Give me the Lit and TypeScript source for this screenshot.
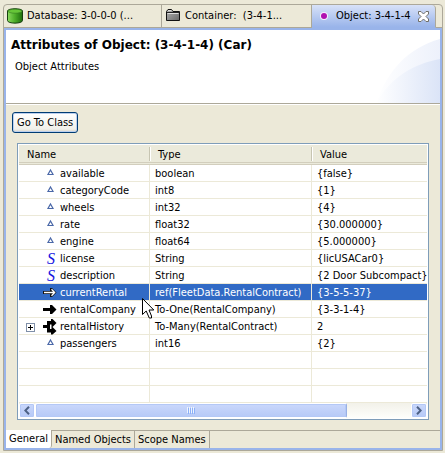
import { LitElement, html, svg, css, nothing } from "lit";
import { customElement } from "lit/decorators.js";
import { classMap } from "lit/directives/class-map.js";

type Kind = "value" | "string" | "ref" | "one" | "many";
interface Attribute {
  name: string;
  kind: Kind;
  type: string;
  value: string;
  selected?: boolean;
}

const ATTRIBUTES: Attribute[] = [
  { name: "available", kind: "value", type: "boolean", value: "{false}" },
  { name: "categoryCode", kind: "value", type: "int8", value: "{1}" },
  { name: "wheels", kind: "value", type: "int32", value: "{4}" },
  { name: "rate", kind: "value", type: "float32", value: "{30.000000}" },
  { name: "engine", kind: "value", type: "float64", value: "{5.000000}" },
  { name: "license", kind: "string", type: "String", value: "{licUSACar0}" },
  { name: "description", kind: "string", type: "String", value: "{2 Door Subcompact}" },
  { name: "currentRental", kind: "ref", type: "ref(FleetData.RentalContract)", value: "{3-5-5-37}", selected: true },
  { name: "rentalCompany", kind: "one", type: "To-One(RentalCompany)", value: "{3-3-1-4}" },
  { name: "rentalHistory", kind: "many", type: "To-Many(RentalContract)", value: "2" },
  { name: "passengers", kind: "value", type: "int16", value: "{2}" },
];
const EMPTY_ROWS = [0, 1, 2];

const KIND_ICONS = {
  value: svg`<path d="M7.5 4 L10 8.5 H5 Z" fill="#fff" stroke="#4a68a8" stroke-width="1.2"/>`,
  ref: svg`<path d="M0 6H7V3H9L13.5 7.5L9 12H7V9H0Z" fill="#111"/><path d="M1 7.5H12M8.5 4.3L11.7 7.5L8.5 10.7" fill="none" stroke="#fff" stroke-width="1.3"/>`,
  one: svg`<path d="M0 6H7V3H9L13.5 7.5L9 12H7V9H0Z" fill="#000"/>`,
  many: svg`<path d="M0 6H4V2H8V0H9.5L13.5 4L9.5 8L13.5 12L9.5 15.5H8V13.5H4V9H0ZM7 5.5V10H8.5V5.5Z" fill="#000" fill-rule="evenodd"/>`,
};

@customElement("app-root")
export class AppRoot extends LitElement {
  static styles = css`
    :host {
      display: flex;
      flex-direction: column;
      box-sizing: border-box;
      min-height: 100vh;
      padding: 4px 2px 2px 3px;
      background: #ece9d8;
      color: #000;
      font: 11px/16px "DejaVu Sans Condensed", "Noto Sans", sans-serif;
      white-space: nowrap;
    }
    button {
      font: inherit;
      color: inherit;
      margin: 0;
      padding: 0;
      border: 0;
      background: none;
      text-align: left;
    }
    svg { display: block; flex: none; }
    .editor {
      flex: 1;
      display: flex;
      flex-direction: column;
      border: 1px solid #aca899;
      border-radius: 4px 4px 0 0;
    }
    .tabs {
      display: grid;
      grid-template-columns: 158fr 150fr 124fr 6fr;
      height: 23px;
    }
    .tab {
      display: flex;
      align-items: center;
      box-sizing: border-box;
      gap: 4px;
      padding: 0 3px;
      border-right: 1px solid #aca899;
      border-bottom: 1px solid #aca899;
      overflow: hidden;
    }
    .object {
      padding: 0 6px 0 4px;
      border-bottom-color: #99b4ea;
      border-radius: 0 4px 0 0;
      background: linear-gradient(#d8e2f8, #99b4ea);
    }
    .rest { border-bottom: 1px solid #aca899; }
    .label { flex: 1; white-space: pre; }
    .content {
      flex: 1;
      display: flex;
      flex-direction: column;
      border: 2px solid #99b4ea;
    }
    .banner {
      display: flex;
      justify-content: space-between;
      height: 73px;
      background: #fff;
      border-bottom: 1px solid #aca899;
    }
    .heading { padding: 6px 5px; }
    h1 {
      margin: 0;
      font: bold 12px/18px "DejaVu Sans", sans-serif;
    }
    p { margin: 5px 4px; }
    .body {
      flex: 1;
      padding: 7px 11px 10px;
      border-top: 1px solid #fff;
    }
    .go {
      display: block;
      height: 21px;
      margin: 0 -5px;
      padding: 0 4px;
      border: 1px solid #003c74;
      border-radius: 3px;
      background: linear-gradient(#fff, #f0f0ea 85%, #d6d0c5);
      box-shadow: inset 0 0 0 1px #bcd0ee;
    }
    .frame {
      margin-top: 10px;
      padding: 1px;
      border: 1px solid #7f9db9;
      background: #fff;
    }
    table {
      width: 100%;
      table-layout: fixed;
      border-collapse: separate;
      border-spacing: 0;
    }
    .name-col { width: 131px; }
    .type-col { width: 162px; }
    th {
      position: relative;
      height: 15px;
      padding: 2px 0 0 8px;
      border-bottom: 3px double #d2cebd;
      background: #ebeadb;
      font-weight: normal;
      line-height: 15px;
      text-align: left;
    }
    th + th::before {
      content: "";
      position: absolute;
      left: -1px;
      top: 2px;
      bottom: 1px;
      border-left: 1px solid #c7c5b2;
      border-right: 1px solid #fff;
    }
    td {
      position: relative;
      height: 14px;
      line-height: 14px;
      padding: 2px 0 0 5px;
      border-right: 1px solid #ece9d8;
      border-bottom: 1px solid #ece9d8;
    }
    td:last-child { border-right: 0; }
    .selected td {
      background: #316ac5;
      color: #fff;
    }
    .name {
      display: grid;
      grid-template: 14px / 18px 16px 1fr;
      align-items: center;
      column-gap: 1px;
    }
    .expand {
      width: 9px;
      height: 9px;
      margin-left: 2px;
    }
    .script {
      color: #1414e0;
      font: italic 16px/14px "Liberation Serif", serif;
      text-align: center;
    }
    .cursor {
      position: absolute;
      z-index: 1;
      left: -8px;
      top: 14px;
    }
    .scroll {
      display: flex;
      height: 15px;
      background: linear-gradient(#f2f1e9, #fefefb);
    }
    .arrow, .thumb {
      display: flex;
      align-items: center;
      justify-content: center;
      box-sizing: border-box;
      border: 1px solid #fff;
      border-radius: 2px;
      background: linear-gradient(#cad8fc, #b6c9f6);
      box-shadow: inset 0 0 0 1px #b4c8f6;
    }
    .arrow { width: 16px; }
    .thumb { flex: 312 1 0; border-right-color: #98b0e4; }
    .track { flex: 65 1 0; }
    .pages {
      display: flex;
      height: 17px;
      border-top: 1px solid #aca899;
    }
    .page {
      padding: 0 3px;
      border-right: 1px solid #aca899;
    }
    .current {
      margin-top: -1px;
      background: #fff;
      border-radius: 0 0 3px 0;
    }
  `;

  private nameCell(a: Attribute) {
    return html`<div class="name">
      ${a.kind === "many"
        ? html`<button class="expand" aria-label="Expand ${a.name}">
            <svg width="9" height="9" viewBox="0 0 9 9">
              <rect x=".5" y=".5" width="8" height="8" fill="#fff" stroke="#7f8fa8" />
              <path d="M2 4.5H7M4.5 2V7" stroke="#000" />
            </svg>
          </button>`
        : html`<span></span>`}
      ${a.kind === "string"
        ? html`<span class="script">S</span>`
        : html`<svg width="16" height="16" viewBox="0 0 16 16">${KIND_ICONS[a.kind]}</svg>`}
      <span>${a.name}</span>
    </div>`;
  }

  private row(a: Attribute) {
    return html`<tr class=${classMap({ selected: !!a.selected })}>
      <td>${this.nameCell(a)}</td>
      <td>
        ${a.type}${a.selected
          ? html`<svg class="cursor" width="13" height="21" viewBox="0 0 13 21">
              <path d="M.5 .5V16.5L4.2 13L7.3 20H9.5V18L7 12H11.8Z" fill="#fff" stroke="#000" />
            </svg>`
          : nothing}
      </td>
      <td>${a.value}</td>
    </tr>`;
  }

  render() {
    return html`
      <div class="editor">
        <nav class="tabs">
          <button class="tab">
            <svg width="16" height="16" viewBox="0 0 16 16">
              <defs>
                <linearGradient id="green">
                  <stop stop-color="#8cdc60" /><stop offset=".5" stop-color="#4cac28" /><stop offset="1" stop-color="#1c6c0c" />
                </linearGradient>
              </defs>
              <path d="M.5 3C.5 0 15.5 0 15.5 3V12.5C15.5 16 .5 16 .5 12.5Z" fill="url(#green)" stroke="#163f10" />
              <ellipse cx="8" cy="3.2" rx="7" ry="2" fill="#66c638" stroke="#347820" stroke-width=".6" />
            </svg>
            <span class="label">Database: 3-0-0-0 (...</span>
          </button>
          <button class="tab">
            <svg width="16" height="16" viewBox="0 0 16 16">
              <defs>
                <linearGradient id="grey" x2="1" y2="1">
                  <stop stop-color="#b4b4b4" /><stop offset="1" stop-color="#686868" />
                </linearGradient>
              </defs>
              <path d="M1.5 12.5V3.5L3 1.5H6.5L8 3.5H14.5V12.5Z" fill="url(#grey)" stroke="#111" />
              <path d="M3 2.5H6.5M2.5 5.5H13.5" stroke="#ddd" />
              <path d="M2 4.5H14" stroke="#222" />
            </svg>
            <span class="label">Container:  (3-4-1...</span>
          </button>
          <button class="tab object">
            <svg width="16" height="16" viewBox="0 0 16 16">
              <circle cx="8" cy="8" r="4" fill="#f4eefc" /><circle cx="8" cy="8" r="3" fill="#b010b0" />
            </svg>
            <span class="label">Object: 3-4-1-4</span>
            <svg width="11" height="11" viewBox="0 0 11 11">
              <path d="M.5 .5H3L5.5 3L8 .5H10.5V3L8 5.5L10.5 8V10.5H8L5.5 8L3 10.5H.5V8L3 5.5L.5 3Z" fill="#fff" stroke="#706f68" />
            </svg>
          </button>
          <span class="rest"></span>
        </nav>
        <main class="content">
          <header class="banner">
            <div class="heading">
              <h1>Attributes of Object: (3-4-1-4) (Car)</h1>
              <p>Object Attributes</p>
            </div>
            <svg width="66" height="73" viewBox="0 0 66 73">
              <defs>
                <linearGradient id="swoosh">
                  <stop stop-color="#fff" /><stop offset="1" stop-color="#dbe4f7" />
                </linearGradient>
                <linearGradient id="haze">
                  <stop stop-color="#fff" /><stop offset="1" stop-color="#edf1fb" />
                </linearGradient>
              </defs>
              <path d="M2 73C14 40 34 18 66 9V73Z" fill="url(#haze)" />
              <path d="M2 73C18 46 40 34 66 29V73Z" fill="url(#swoosh)" />
            </svg>
          </header>
          <section class="body">
            <button class="go">Go To Class</button>
            <div class="frame">
              <table>
                <colgroup>
                  <col class="name-col" /><col class="type-col" /><col />
                </colgroup>
                <thead>
                  <tr><th>Name</th><th>Type</th><th>Value</th></tr>
                </thead>
                <tbody>
                  ${ATTRIBUTES.map((a) => this.row(a))}
                  ${EMPTY_ROWS.map(() => html`<tr><td></td><td></td><td></td></tr>`)}
                </tbody>
              </table>
              <div class="scroll">
                <button class="arrow" aria-label="Scroll left">
                  <svg width="6" height="9" viewBox="0 0 6 9"><path d="M5 .7L1.3 4.5L5 8.3" fill="none" stroke="#4d6185" stroke-width="2" /></svg>
                </button>
                <div class="thumb">
                  <svg width="8" height="7" viewBox="0 0 8 7"><path d="M.5 0V6M2.5 0V6M4.5 0V6M6.5 0V6" stroke="#eef4fe" /><path d="M1.5 1V7M3.5 1V7M5.5 1V7M7.5 1V7" stroke="#8cb0f8" /></svg>
                </div>
                <div class="track"></div>
                <button class="arrow" aria-label="Scroll right">
                  <svg width="6" height="9" viewBox="0 0 6 9"><path d="M1 .7L4.7 4.5L1 8.3" fill="none" stroke="#4d6185" stroke-width="2" /></svg>
                </button>
              </div>
            </div>
          </section>
          <nav class="pages">
            <button class="page current">General</button>
            <button class="page">Named Objects</button>
            <button class="page">Scope Names</button>
          </nav>
        </main>
      </div>
    `;
  }
}
